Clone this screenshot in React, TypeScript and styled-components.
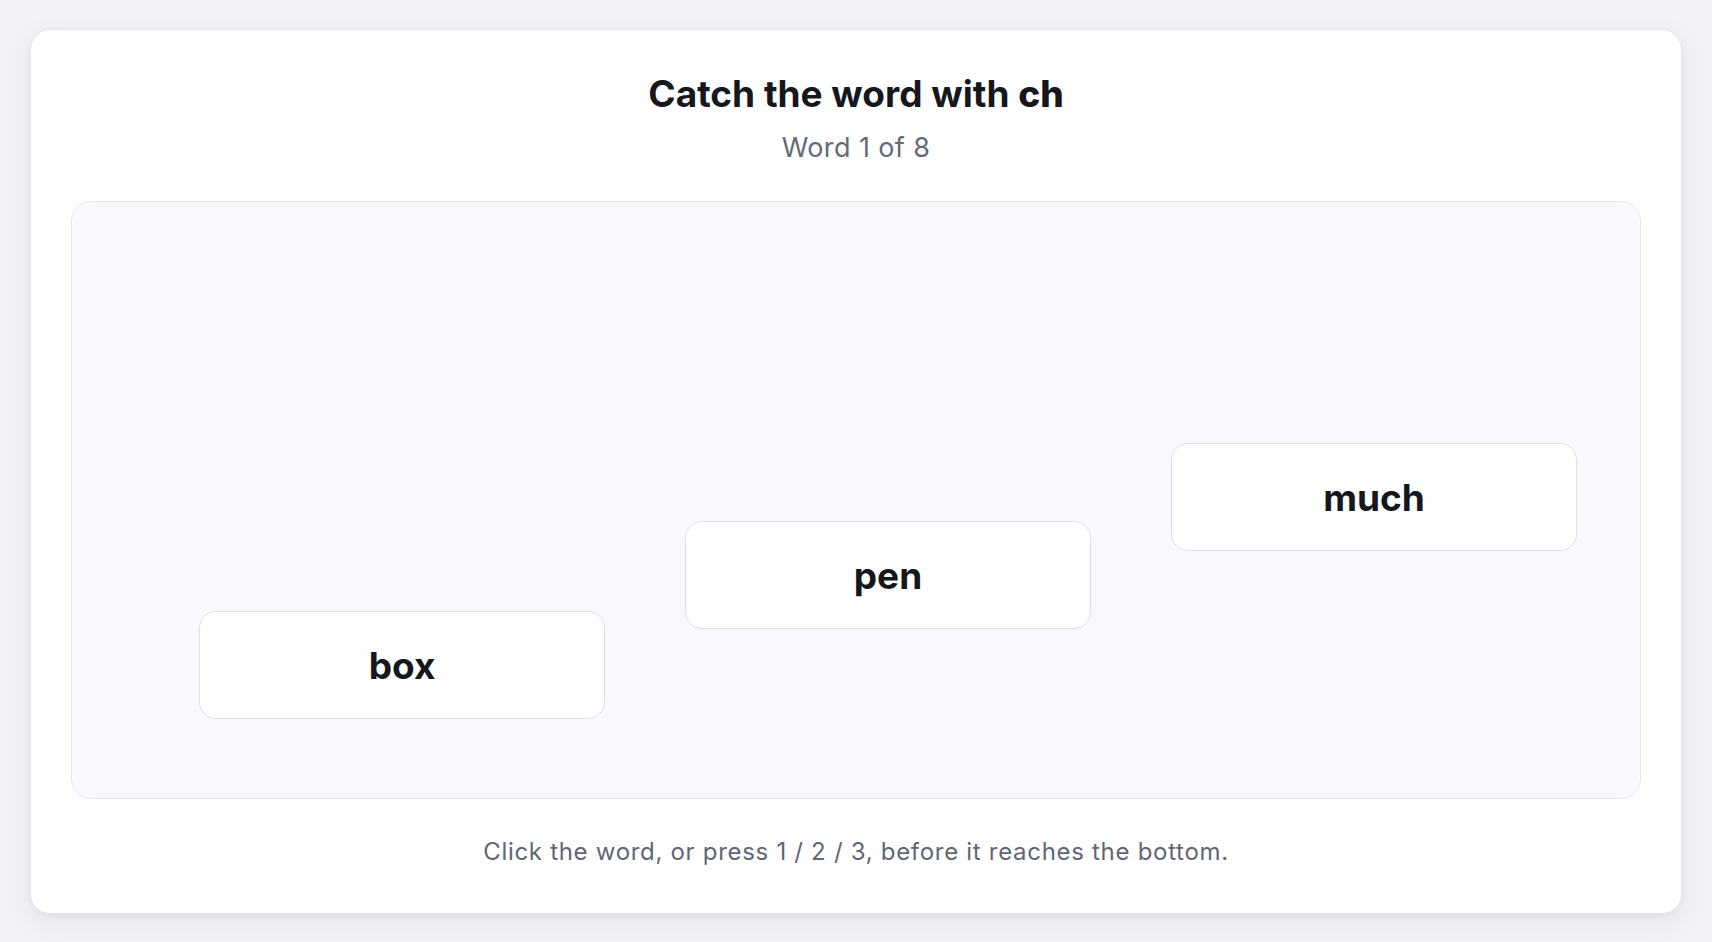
import React from "react";
import styled, { createGlobalStyle } from "styled-components";

const GlobalStyle = createGlobalStyle`
  html, body { margin: 0; padding: 0; }
  body {
    background: #f2f3f7;
    font-family: Inter, "Noto Sans", "Liberation Sans", sans-serif;
    -webkit-font-smoothing: antialiased;
  }
  * { box-sizing: border-box; }
`;

const Page = styled.main`
  min-height: 100vh;
  padding: 29px 30px 30px;
`;

const Card = styled.section`
  display: flex;
  flex-direction: column;
  align-items: stretch;
  background: #ffffff;
  border: 1px solid #e3e5ea;
  border-radius: 20px;
  box-shadow: 0 8px 28px rgba(30, 40, 70, 0.07), 0 2px 6px rgba(30, 40, 70, 0.04);
  padding: 42px 40px 43px;
`;

const Title = styled.h1`
  margin: 0;
  text-align: center;
  font-size: 37px;
  line-height: 44px;
  font-weight: 700;
  color: #15171c;
`;

const Strong = styled.span`
  font-weight: 800;
`;

const Subtitle = styled.p`
  margin: 15px 0 0;
  text-align: center;
  font-size: 27px;
  line-height: 34px;
  letter-spacing: 0.4px;
  color: #646b78;
`;

const Stage = styled.div`
  position: relative;
  margin-top: 36px;
  height: 598px;
  background: #f8f9fc;
  border: 1px solid #e4e6eb;
  border-radius: 20px;
  overflow: hidden;
`;

const Word = styled.button<{ $left: number; $top: number }>`
  position: absolute;
  left: ${(p) => p.$left}px;
  top: ${(p) => p.$top}px;
  width: 406px;
  height: 108px;
  display: flex;
  align-items: center;
  justify-content: center;
  background: #ffffff;
  border: 1px solid #dcdfe5;
  border-radius: 17px;
  font-family: inherit;
  font-size: 37px;
  font-weight: 700;
  color: #15171c;
  cursor: pointer;
  padding: 0;
`;

const Hint = styled.p`
  margin: 35px 0 0;
  text-align: center;
  font-size: 24px;
  line-height: 36px;
  letter-spacing: 0.7px;
  color: #5f6674;
`;

const words = [
  { text: "box", left: 127, top: 409 },
  { text: "pen", left: 613, top: 319 },
  { text: "much", left: 1099, top: 241 },
];

export default function App() {
  return (
    <>
      <GlobalStyle />
      <Page>
        <Card>
          <Title>
            Catch the word with <Strong>ch</Strong>
          </Title>
          <Subtitle>Word 1 of 8</Subtitle>
          <Stage>
            {words.map((w) => (
              <Word key={w.text} $left={w.left} $top={w.top}>
                {w.text}
              </Word>
            ))}
          </Stage>
          <Hint>Click the word, or press 1 / 2 / 3, before it reaches the bottom.</Hint>
        </Card>
      </Page>
    </>
  );
}
